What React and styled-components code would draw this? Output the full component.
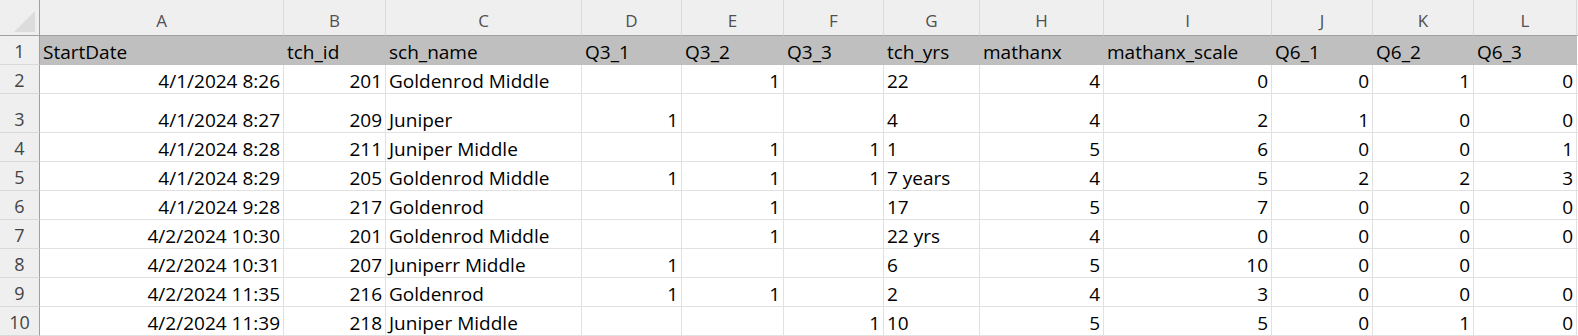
import React from 'react';
import styled, { createGlobalStyle } from 'styled-components';

const GlobalStyle = createGlobalStyle`
  html, body {
    margin: 0;
    padding: 0;
    background: #ffffff;
  }
  body {
    font-family: "Open Sans", "Noto Sans", sans-serif;
  }
`;

const widths = [244, 102, 196, 100, 102, 100, 96, 124, 168, 101, 101, 103];
const letters = ['A', 'B', 'C', 'D', 'E', 'F', 'G', 'H', 'I', 'J', 'K', 'L'];
const heads = [
  'StartDate', 'tch_id', 'sch_name', 'Q3_1', 'Q3_2', 'Q3_3',
  'tch_yrs', 'mathanx', 'mathanx_scale', 'Q6_1', 'Q6_2', 'Q6_3',
];

// n = number (right aligned), s = text (left aligned)
const rows = [
  { h: 29, cells: [['4/1/2024 8:26', 'n'], ['201', 'n'], ['Goldenrod Middle', 's'], ['', 's'], ['1', 'n'], ['', 's'], ['22', 's'], ['4', 'n'], ['0', 'n'], ['0', 'n'], ['1', 'n'], ['0', 'n']] },
  { h: 39, cells: [['4/1/2024 8:27', 'n'], ['209', 'n'], ['Juniper', 's'], ['1', 'n'], ['', 's'], ['', 's'], ['4', 's'], ['4', 'n'], ['2', 'n'], ['1', 'n'], ['0', 'n'], ['0', 'n']] },
  { h: 29, cells: [['4/1/2024 8:28', 'n'], ['211', 'n'], ['Juniper Middle', 's'], ['', 's'], ['1', 'n'], ['1', 'n'], ['1', 's'], ['5', 'n'], ['6', 'n'], ['0', 'n'], ['0', 'n'], ['1', 'n']] },
  { h: 29, cells: [['4/1/2024 8:29', 'n'], ['205', 'n'], ['Goldenrod Middle', 's'], ['1', 'n'], ['1', 'n'], ['1', 'n'], ['7 years', 's'], ['4', 'n'], ['5', 'n'], ['2', 'n'], ['2', 'n'], ['3', 'n']] },
  { h: 29, cells: [['4/1/2024 9:28', 'n'], ['217', 'n'], ['Goldenrod', 's'], ['', 's'], ['1', 'n'], ['', 's'], ['17', 's'], ['5', 'n'], ['7', 'n'], ['0', 'n'], ['0', 'n'], ['0', 'n']] },
  { h: 29, cells: [['4/2/2024 10:30', 'n'], ['201', 'n'], ['Goldenrod Middle', 's'], ['', 's'], ['1', 'n'], ['', 's'], ['22 yrs', 's'], ['4', 'n'], ['0', 'n'], ['0', 'n'], ['0', 'n'], ['0', 'n']] },
  { h: 29, cells: [['4/2/2024 10:31', 'n'], ['207', 'n'], ['Juniperr Middle', 's'], ['1', 'n'], ['', 's'], ['', 's'], ['6', 's'], ['5', 'n'], ['10', 'n'], ['0', 'n'], ['0', 'n'], ['', 's']] },
  { h: 29, cells: [['4/2/2024 11:35', 'n'], ['216', 'n'], ['Goldenrod', 's'], ['1', 'n'], ['1', 'n'], ['', 's'], ['2', 's'], ['4', 'n'], ['3', 'n'], ['0', 'n'], ['0', 'n'], ['0', 'n']] },
  { h: 29, cells: [['4/2/2024 11:39', 'n'], ['218', 'n'], ['Juniper Middle', 's'], ['', 's'], ['', 's'], ['1', 'n'], ['10', 's'], ['5', 'n'], ['5', 'n'], ['0', 'n'], ['1', 'n'], ['0', 'n']] },
];

const Sheet = styled.div`
  display: grid;
  grid-template-columns: 40px ${widths.map((w) => `${w}px`).join(' ')} 1fr;
  grid-template-rows: 36px 29px ${rows.map((r) => `${r.h}px`).join(' ')};
  width: 1578px;
  height: 336px;
  overflow: hidden;
  background: #ffffff;
  font-family: "Open Sans", "Noto Sans", sans-serif;
`;

const Corner = styled.div`
  background: #efefef;
  border-right: 1px solid #9f9f9f;
  border-bottom: 1px solid #9f9f9f;
  display: flex;
  align-items: flex-end;
  justify-content: flex-end;
  padding: 0 3px 3px 0;
  box-sizing: border-box;
`;

const ColHead = styled.div`
  background: #efefef;
  border-bottom: 1px solid #9f9f9f;
  border-right: 1px solid #d9d9d9;
  display: flex;
  align-items: flex-end;
  justify-content: center;
  padding-bottom: 2px;
  box-sizing: border-box;
  color: #505050;
  font-size: 17px;
  line-height: 24px;
`;

const Filler = styled.div`
  background: ${(p) => (p.$head ? '#efefef' : '#ffffff')};
  border-bottom: 1px solid ${(p) => (p.$head ? '#9f9f9f' : '#e1e1e1')};
  box-sizing: border-box;
`;

const RowHead = styled.div`
  background: #efefef;
  border-right: 1px solid #9f9f9f;
  border-bottom: 1px solid #d9d9d9;
  display: flex;
  align-items: flex-end;
  justify-content: center;
  padding-bottom: 1px;
  box-sizing: border-box;
  color: #444444;
  font-size: 18px;
  line-height: 24px;
`;

const Cell = styled.div`
  background: ${(p) => (p.$fill ? '#bfbfbf' : '#ffffff')};
  border-right: 1px solid ${(p) => (p.$fill ? '#bfbfbf' : '#e1e1e1')};
  border-bottom: 1px solid ${(p) => (p.$fill ? '#bfbfbf' : '#e1e1e1')};
  display: flex;
  align-items: flex-end;
  justify-content: ${(p) => (p.$num ? 'flex-end' : 'flex-start')};
  padding: 0 3px 0 3px;
  box-sizing: border-box;
  color: #000000;
  font-size: 19px;
  line-height: 24px;
  white-space: nowrap;
  overflow: visible;
`;

const CornerMark = () => (
  <svg width="22" height="21" viewBox="0 0 22 21">
    <polygon points="21,0 21,21 0,21" fill="#dcdcdc" />
  </svg>
);

export default function App() {
  return (
    <>
      <GlobalStyle />
      <Sheet>
        <Corner>
          <CornerMark />
        </Corner>
        {letters.map((l) => (
          <ColHead key={l}>{l}</ColHead>
        ))}
        <Filler $head />

        <RowHead>1</RowHead>
        {heads.map((h) => (
          <Cell key={h} $fill>{h}</Cell>
        ))}
        <Filler />

        {rows.map((r, i) => (
          <React.Fragment key={i}>
            <RowHead>{i + 2}</RowHead>
            {r.cells.map(([v, t], j) => (
              <Cell key={j} $num={t === 'n'}>{v}</Cell>
            ))}
            <Filler />
          </React.Fragment>
        ))}
      </Sheet>
    </>
  );
}
